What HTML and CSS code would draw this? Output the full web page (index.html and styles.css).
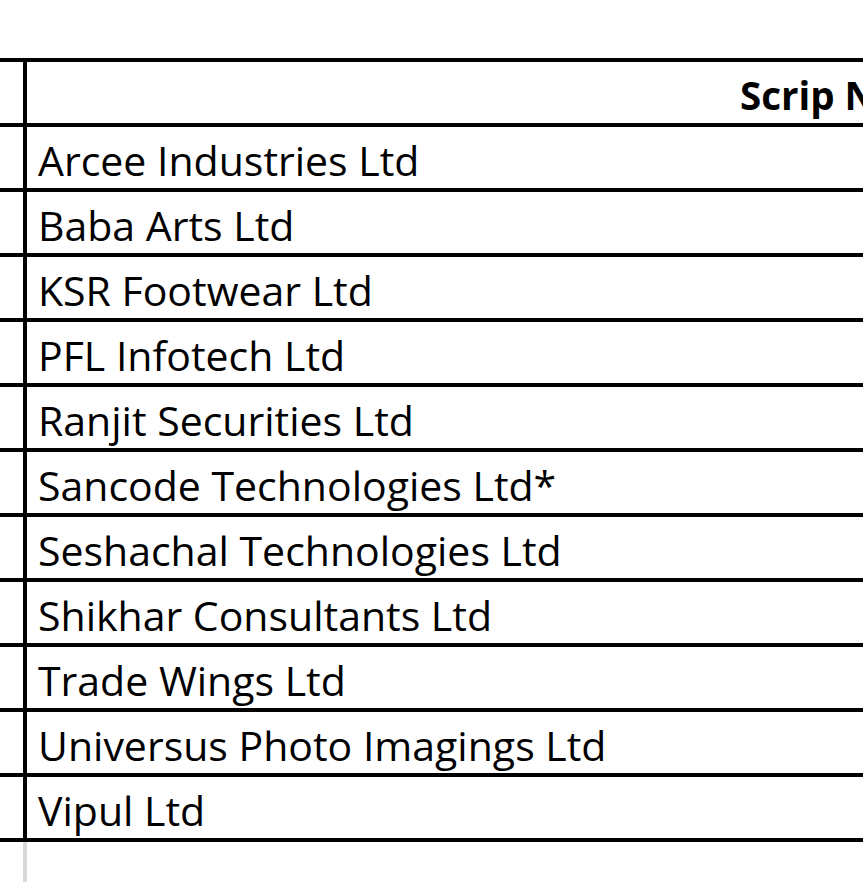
FILE: index.html
```html
<!DOCTYPE html>
<html lang="en">
<head>
<meta charset="utf-8">
<title>Scrip Name</title>
<link rel="stylesheet" href="styles.css">
</head>
<body>
<div class="sheet">
  <div class="row head">
    <div class="idx"></div>
    <div class="name">Scrip Name</div>
  </div>
  <div class="row"><div class="idx"></div><div class="name">Arcee Industries Ltd</div></div>
  <div class="row"><div class="idx"></div><div class="name">Baba Arts Ltd</div></div>
  <div class="row"><div class="idx"></div><div class="name">KSR Footwear Ltd</div></div>
  <div class="row"><div class="idx"></div><div class="name">PFL Infotech Ltd</div></div>
  <div class="row"><div class="idx"></div><div class="name">Ranjit Securities Ltd</div></div>
  <div class="row"><div class="idx"></div><div class="name">Sancode Technologies Ltd*</div></div>
  <div class="row"><div class="idx"></div><div class="name">Seshachal Technologies Ltd</div></div>
  <div class="row"><div class="idx"></div><div class="name">Shikhar Consultants Ltd</div></div>
  <div class="row"><div class="idx"></div><div class="name">Trade Wings Ltd</div></div>
  <div class="row"><div class="idx"></div><div class="name">Universus Photo Imagings Ltd</div></div>
  <div class="row"><div class="idx"></div><div class="name">Vipul Ltd</div></div>
  <div class="grid-tail"></div>
</div>
</body>
</html>
```
FILE: styles.css
```css
html, body {
  margin: 0;
  padding: 0;
  background: #ffffff;
  overflow: hidden;
}

.sheet {
  margin-top: 58px;
  width: 863px;
  border-top: 4px solid #000;
  font-family: "Open Sans", "Noto Sans", sans-serif;
  color: #000;
}

.row {
  display: flex;
  height: 61px;
  border-bottom: 4px solid #000;
}

.idx {
  flex: 0 0 23px;
  border-right: 4px solid #000;
}

.name {
  flex: 1 1 auto;
  min-width: 0;
  white-space: nowrap;
  overflow: hidden;
  font-size: 41px;
  line-height: normal;
  padding: 5px 0 0 11px;
}

.head .name {
  font-size: 38.5px;
  font-weight: bold;
  padding: 7px 0 0 713px;
}

.grid-tail {
  margin-left: 23px;
  width: 4px;
  height: 41px;
  background: #d9d9d9;
}
```
